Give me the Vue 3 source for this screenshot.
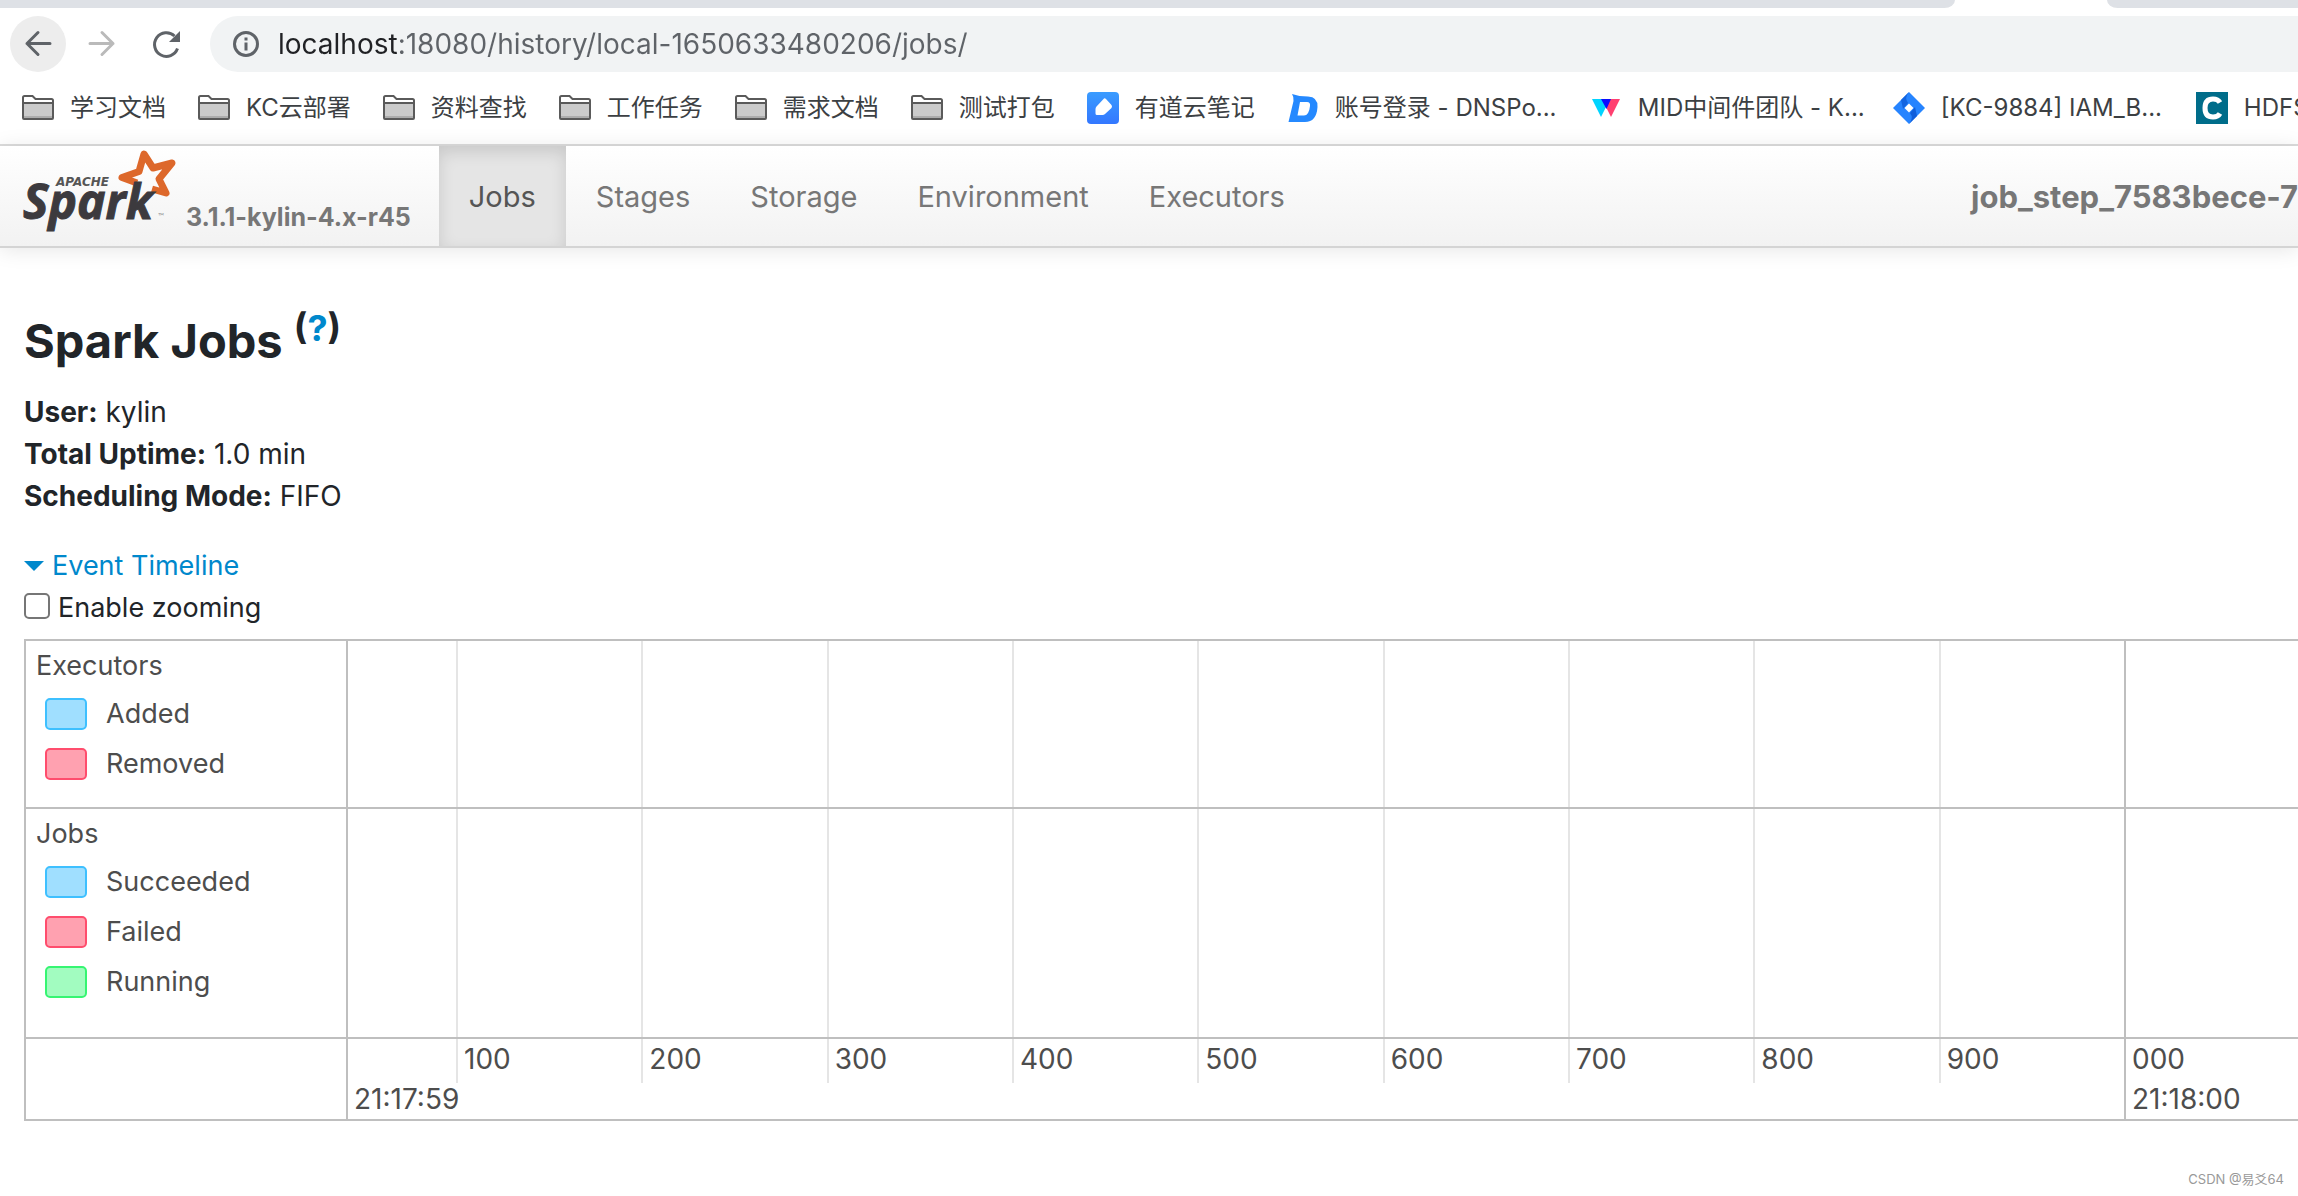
<script setup>
import { ref } from 'vue'

const address = ref('localhost:18080/history/local-1650633480206/jobs/')
const zooming = ref(false)

const bookmarks = [
  { icon: 'folder', label: '学习文档' },
  { icon: 'folder', label: 'KC云部署' },
  { icon: 'folder', label: '资料查找' },
  { icon: 'folder', label: '工作任务' },
  { icon: 'folder', label: '需求文档' },
  { icon: 'folder', label: '测试打包' },
  { icon: 'note', label: '有道云笔记' },
  { icon: 'dns', label: '账号登录 - DNSPo...', site: true },
  { icon: 'wiki', label: 'MID中间件团队 - K...', site: true },
  { icon: 'jira', label: '[KC-9884] IAM_B...', site: true },
  { icon: 'hdfs', label: 'HDFS' }
]

const tabs = ['Jobs', 'Stages', 'Storage', 'Environment', 'Executors']

const summary = [
  { name: 'User:', value: 'kylin' },
  { name: 'Total Uptime:', value: '1.0 min' },
  { name: 'Scheduling Mode:', value: 'FIFO' }
]

const groups = [
  {
    name: 'Executors',
    items: [
      { label: 'Added', tone: 'blue' },
      { label: 'Removed', tone: 'red' }
    ]
  },
  {
    name: 'Jobs',
    items: [
      { label: 'Succeeded', tone: 'blue' },
      { label: 'Failed', tone: 'red' },
      { label: 'Running', tone: 'green' }
    ]
  }
]

const ticks = [
  { minor: '', major: '21:17:59', first: true },
  { minor: '100' },
  { minor: '200' },
  { minor: '300' },
  { minor: '400' },
  { minor: '500' },
  { minor: '600' },
  { minor: '700' },
  { minor: '800' },
  { minor: '900' },
  { minor: '000', major: '21:18:00' }
]
</script>

<template>
  <div class="window">
    <header class="browser">
      <div class="strip">
        <span class="strip-left"></span>
        <span class="strip-right"></span>
      </div>

      <div class="toolbar">
        <button class="tool active" type="button" aria-label="Back">
          <svg width="32" height="32" viewBox="0 0 32 32" fill="none" stroke="#5f6368" stroke-width="3" stroke-linecap="round" stroke-linejoin="round">
            <path d="M28 15.500H5M16 4.500L5 15.500L16 26.500" />
          </svg>
        </button>
        <button class="tool" type="button" aria-label="Forward">
          <svg width="32" height="32" viewBox="0 0 32 32" fill="none" stroke="#bababa" stroke-width="3" stroke-linecap="round" stroke-linejoin="round">
            <path d="M4 15.500H27M16 4.500L27 15.500L16 26.500" />
          </svg>
        </button>
        <button class="tool" type="button" aria-label="Reload">
          <svg width="32" height="32" viewBox="0 0 32 32">
            <path d="M27.500 20.500A11.800 11.800 0 1 1 24.500 8" fill="none" stroke="#5f6368" stroke-width="3" />
            <path d="M30 3V14H19Z" fill="#5f6368" />
          </svg>
        </button>
        <div class="omnibox">
          <svg width="28" height="28" viewBox="0 0 28 28" fill="none" stroke="#5f6368" stroke-width="3">
            <circle cx="14" cy="14" r="11.500" />
            <path d="M14 12.500V20.500M14 7.500V10.500" />
          </svg>
          <input v-model="address" class="address" type="text" aria-label="Address" spellcheck="false" />
        </div>
      </div>

      <nav class="bookmarks">
        <a v-for="b in bookmarks" :key="b.label" href="#" class="bookmark">
          <svg v-if="b.icon === 'folder'" width="32" height="32" viewBox="0 0 32 32">
            <path d="M1 26V5.500Q1 4 2.500 4H10.500L13.500 7H29.500Q31 7 31 8.500V26Q31 27 30 27H2Q1 27 1 26Z" fill="#fff" />
            <rect x="1" y="11" width="30" height="16" fill="#cbcbcb" />
            <rect x="1" y="24" width="30" height="3" fill="#adadad" />
            <path d="M1 26V5.500Q1 4 2.500 4H10.500L13.500 7H29.500Q31 7 31 8.500V26Q31 27 30 27H2Q1 27 1 26ZM1 11H31" fill="none" stroke="#5a5a5a" stroke-width="2" />
          </svg>
          <svg v-else-if="b.icon === 'note'" width="32" height="32" viewBox="0 0 32 32">
            <defs>
              <linearGradient id="note-bg" x1="0" y1="0" x2="0" y2="1">
                <stop offset="0" stop-color="#3a9cff" />
                <stop offset="1" stop-color="#3377ff" />
              </linearGradient>
            </defs>
            <rect width="32" height="32" rx="4" fill="url(#note-bg)" />
            <path d="M17 6.500Q18 6 19 7L24.500 13Q25.500 14.500 24.500 16L18 22Q17 23 15.500 23H10Q8.500 23 8.500 21.500V17Q8.500 15.500 9.500 14.500Z" fill="#fff" />
          </svg>
          <svg v-else-if="b.icon === 'dns'" width="32" height="32" viewBox="0 0 32 32">
            <path d="M5 2Q12 4.500 21 4.500Q31 5 30.500 15Q29.500 30 18 30H1.500L6.500 9Q7 5 5 2ZM13 10L10.500 23.500H17Q22 23.500 23 14Q23.500 10 20 10Z" fill="#2589ff" fill-rule="evenodd" />
          </svg>
          <svg v-else-if="b.icon === 'wiki'" width="32" height="32" viewBox="0 0 32 32">
            <path d="M2 7H20L11 25Z" fill="#00d4ff" />
            <path d="M30 7H12L21 25Z" fill="#ff4070" />
            <path d="M11 7H21L16.500 17Z" fill="#0b0bff" />
          </svg>
          <svg v-else-if="b.icon === 'jira'" width="32" height="32" viewBox="0 0 32 32">
            <path d="M16 0L32 16L16 32L0 16Z" fill="#2684ff" />
            <path d="M16 0Q11 6 15 11L10 17L8 8Z" fill="#1264e0" />
            <path d="M16 32Q21 26 17 21L22 15L24 24Z" fill="#0f5edb" />
            <path d="M16 11.500L20.500 16L16 20.500L11.500 16Z" fill="#fff" />
          </svg>
          <svg v-else width="32" height="32" viewBox="0 0 32 32">
            <rect width="32" height="32" fill="#006d8a" />
            <path d="M24 10.500Q22 7 17 7Q9 7 9 16Q9 25 17 25Q22 25 24 21.500" fill="none" stroke="#fff" stroke-width="5" />
          </svg>
          <span :class="{ site: b.site }">{{ b.label }}</span>
        </a>
      </nav>
    </header>

    <nav class="navbar">
      <a href="#" class="brand">
        <svg width="156" height="84" viewBox="0 0 156 84" role="img" aria-label="Apache Spark">
          <path d="M117 35L102 29.500L119 23.500L124 6L133 20L152 15L139 31L146 45L132 41" fill="none" stroke="#dd682b" stroke-width="7" stroke-linejoin="round" />
          <text x="36" y="38" class="logo-top">APACHE</text>
          <text x="3" y="71" class="logo-name">Spark</text>
          <text x="138" y="71" class="logo-tm">™</text>
        </svg>
        <span class="version">3.1.1-kylin-4.x-r45</span>
      </a>
      <a v-for="(t, i) in tabs" :key="t" href="#" class="tab" :class="{ current: i === 0 }">{{ t }}</a>
      <strong class="app-name">job_step_7583bece-7</strong>
    </nav>

    <main class="content">
      <h3 class="title">Spark Jobs <sup>(<a href="#">?</a>)</sup></h3>

      <ul class="summary">
        <li v-for="s in summary" :key="s.name"><strong>{{ s.name }}</strong> {{ s.value }}</li>
      </ul>

      <a href="#" class="toggle"><span class="caret"></span>Event Timeline</a>
      <div class="zoom-option">
        <input id="zooming" v-model="zooming" type="checkbox" />
        <label for="zooming">Enable zooming</label>
      </div>

      <section class="timeline">
        <div v-for="g in groups" :key="g.name" class="row">
          <div class="legend">
            <div class="legend-title">{{ g.name }}</div>
            <div v-for="item in g.items" :key="item.label" class="legend-item">
              <span class="swatch" :class="item.tone"></span>{{ item.label }}
            </div>
          </div>
          <div class="track">
            <span v-for="(t, i) in ticks" :key="i" class="line" :class="{ first: t.first, major: t.major }"></span>
          </div>
        </div>
        <div class="row">
          <div class="legend-empty"></div>
          <div class="track axis">
            <div v-for="(t, i) in ticks" :key="i" class="line tick" :class="{ first: t.first, major: t.major }">
              <span>{{ t.minor }}</span>
              <span v-if="t.major">{{ t.major }}</span>
            </div>
          </div>
        </div>
      </section>
    </main>

    <div class="watermark">CSDN @易爻64</div>
  </div>
</template>

<style>
body {
  background: #fff;
  overflow: hidden;
}
</style>

<style scoped>
.window {
  position: relative;
  min-height: 100vh;
  overflow: hidden;
  font-family: Inter, "Noto Sans CJK SC", sans-serif;
  font-size: 28px;
  line-height: 42px;
  color: #212529;
}
.window * {
  box-sizing: border-box;
}
a {
  color: #0088cc;
  text-decoration: none;
}
.browser {
  border-bottom: 2px solid #dcdcdc;
}
.strip {
  display: flex;
  gap: 152px;
  height: 8px;
}
.strip-left {
  flex: 1955;
  background: #dee1e6;
  border-bottom-right-radius: 16px 12px;
}
.strip-right {
  flex: 191;
  background: #dee1e6;
  border-bottom-left-radius: 16px 12px;
}
.toolbar {
  display: flex;
  align-items: center;
  gap: 8px;
  padding: 8px 0 0 10px;
}
.tool {
  display: flex;
  align-items: center;
  justify-content: center;
  width: 56px;
  height: 56px;
  padding: 0;
  border: 0;
  border-radius: 50%;
  background: none;
}
.tool.active {
  background: #ededed;
}
.omnibox {
  display: flex;
  flex: 1;
  align-items: center;
  gap: 18px;
  height: 56px;
  margin-left: 8px;
  padding-left: 22px;
  border-radius: 28px 0 0 28px;
  background: #f1f3f4;
}
.address {
  flex: 1;
  padding: 0;
  border: 0;
  outline: 0;
  font: inherit;
  color: transparent;
  background: linear-gradient(to right, #202124 121px, #5f6368 121px);
  background-clip: text;
  -webkit-background-clip: text;
}
.bookmarks {
  display: flex;
  gap: 32px;
  height: 72px;
  padding-left: 22px;
  align-items: center;
}
.bookmark {
  display: flex;
  flex: none;
  align-items: center;
  gap: 16px;
  font-size: 24px;
  color: #3c4043;
  white-space: nowrap;
}
.bookmark .site {
  width: 223px;
}
.navbar {
  display: flex;
  height: 102px;
  padding-left: 20px;
  border-bottom: 2px solid #d4d4d4;
  background: linear-gradient(#ffffff, #f2f2f2);
  box-shadow: 0 2px 20px rgba(0, 0, 0, 0.1);
}
.brand {
  display: flex;
  align-items: flex-start;
  gap: 10px;
  padding-top: 2px;
  margin-right: 28px;
}
.logo-top {
  font: italic bold 12px "DejaVu Sans", sans-serif;
  fill: #555;
}
.logo-name {
  font: italic 700 48px "Open Sans", sans-serif;
  fill: #3c3a3e;
  stroke: #3c3a3e;
  stroke-width: 1px;
}
.logo-tm {
  font: 8px Lato, sans-serif;
  fill: #999;
}
.version {
  padding-top: 48px;
  font-size: 25px;
  font-weight: 700;
  color: #777;
}
.tab {
  padding: 30px 30px 0;
  font-size: 29px;
  color: #777;
}
.tab.current {
  color: #555;
  background: #e5e5e5;
  box-shadow: inset 0 6px 16px rgba(0, 0, 0, 0.125);
}
.app-name {
  margin-left: auto;
  padding-top: 30px;
  font-size: 31px;
  color: #777;
}
.content {
  padding: 56px 0 0 24px;
}
.title {
  margin: 0 0 13px;
  font-size: 47px;
  line-height: 74px;
}
.title sup {
  font-size: 36px;
  line-height: 0;
}
.summary {
  margin: 0 0 28px;
  padding: 0;
  list-style: none;
}
.toggle {
  display: flex;
  align-items: center;
  gap: 8px;
  font-size: 27px;
}
.caret {
  border: 10px solid transparent;
  border-top-color: #0088cc;
  border-bottom: 0;
}
.zoom-option {
  display: flex;
  align-items: center;
  gap: 8px;
  font-size: 27px;
}
.zoom-option input {
  appearance: none;
  width: 26px;
  height: 26px;
  margin: 0 0 4px;
  border: 2px solid #767676;
  border-radius: 5px;
  background: #fff;
}
.timeline {
  margin-top: 10px;
  border: 2px solid #bfbfbf;
  border-width: 2px 0 0 2px;
  color: #4d4d4d;
}
.row {
  display: flex;
  border-bottom: 2px solid #bfbfbf;
}
.legend,
.legend-empty {
  flex: none;
  width: 322px;
  border-right: 2px solid #bfbfbf;
}
.legend {
  padding: 4px 10px 18px;
  font-size: 27px;
}
.row + .row .legend {
  padding-bottom: 30px;
}
.legend-item {
  display: flex;
  align-items: center;
  gap: 19px;
  height: 50px;
  padding-left: 9px;
}
.legend-title {
  height: 44px;
}
.swatch {
  width: 42px;
  height: 32px;
  border: 2px solid;
  border-radius: 5px;
}
.swatch.blue {
  background: #a0dfff;
  border-color: #3ec0ff;
}
.swatch.red {
  background: #ffa1b0;
  border-color: #ff4d6d;
}
.swatch.green {
  background: #a2fcc0;
  border-color: #36f572;
}
.track {
  display: grid;
  flex: 1;
  grid-template-columns: 324fr repeat(9, 556fr) 522fr;
}
.line {
  min-width: 0;
  border-left: 2px solid #e5e5e5;
}
.line.major {
  border-color: #bfbfbf;
}
.line.first {
  border-left: 0;
}
.axis {
  height: 80px;
}
.tick {
  display: grid;
  grid-template-rows: 40px 40px;
  height: 44px;
  padding-left: 6px;
  line-height: 40px;
  white-space: nowrap;
}
.tick.major {
  height: 80px;
}
.watermark {
  position: absolute;
  right: 14px;
  bottom: 7px;
  font-size: 13px;
  line-height: 20px;
  color: #999;
}
</style>
